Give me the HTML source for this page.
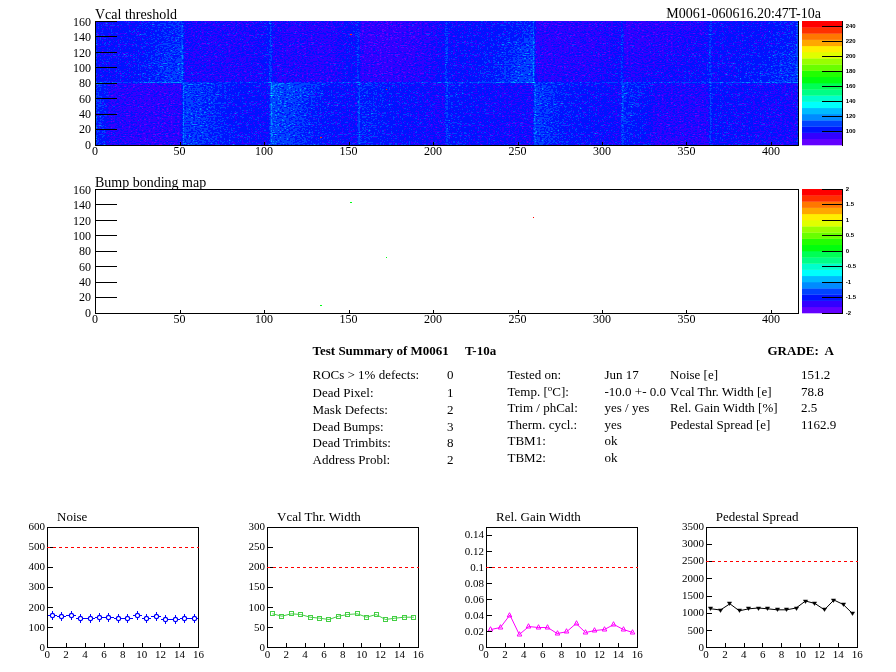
<!DOCTYPE html>
<html><head><meta charset="utf-8"><title>Test Summary of M0061</title>
<style>
html,body{margin:0;padding:0;background:#fff;}
svg{display:block;will-change:transform;}
text{font-family:"Liberation Serif",serif;fill:#000;}
.ax{font-size:12px;}
.bx{font-size:11px;}
.bt{font-size:13px;}
.tt{font-size:14px;}
.st{font-size:13px;}
.sb{font-size:13px;font-weight:bold;}
.pz{font-family:"Liberation Sans",sans-serif;font-weight:bold;font-size:6px;}
.k{stroke:#000;stroke-width:1;fill:none;shape-rendering:crispEdges;}
</style></head><body>
<svg width="896" height="672" viewBox="0 0 896 672">
<rect width="896" height="672" fill="#fff"/>
<defs><linearGradient id="gT0" x1="0" x2="1" y1="0" y2="0"><stop offset="0" stop-color="#3c3c3c"/><stop offset="0.45" stop-color="#3c3c3c"/><stop offset="0.7" stop-color="#454545"/><stop offset="1" stop-color="#4c4c4c"/></linearGradient><linearGradient id="gT1" x1="0" x2="1" y1="0" y2="0"><stop offset="0" stop-color="#333333"/><stop offset="0.75" stop-color="#313131"/><stop offset="0.9" stop-color="#383838"/><stop offset="1" stop-color="#3f3f3f"/></linearGradient><linearGradient id="gT2" x1="0" x2="1" y1="0" y2="0"><stop offset="0" stop-color="#363636"/><stop offset="0.1" stop-color="#303030"/><stop offset="0.7" stop-color="#2e2e2e"/><stop offset="0.85" stop-color="#383838"/><stop offset="1" stop-color="#3e3e3e"/></linearGradient><linearGradient id="gT3" x1="0" x2="1" y1="0" y2="0"><stop offset="0" stop-color="#2a2a2a"/><stop offset="0.3" stop-color="#252525"/><stop offset="0.6" stop-color="#2a2a2a"/><stop offset="0.85" stop-color="#313131"/><stop offset="1" stop-color="#3c3c3c"/></linearGradient><linearGradient id="gT4" x1="0" x2="1" y1="0" y2="0"><stop offset="0" stop-color="#393939"/><stop offset="0.5" stop-color="#3c3c3c"/><stop offset="0.8" stop-color="#454545"/><stop offset="1" stop-color="#4a4a4a"/></linearGradient><linearGradient id="gT5" x1="0" x2="1" y1="0" y2="0"><stop offset="0" stop-color="#2b2b2b"/><stop offset="0.7" stop-color="#2c2c2c"/><stop offset="1" stop-color="#363636"/></linearGradient><linearGradient id="gT6" x1="0" x2="1" y1="0" y2="0"><stop offset="0" stop-color="#2a2a2a"/><stop offset="0.4" stop-color="#2e2e2e"/><stop offset="1" stop-color="#363636"/></linearGradient><linearGradient id="gT7" x1="0" x2="1" y1="0" y2="0"><stop offset="0" stop-color="#393939"/><stop offset="0.6" stop-color="#3c3c3c"/><stop offset="1" stop-color="#444444"/></linearGradient><linearGradient id="gB0" x1="0" x2="1" y1="0" y2="0"><stop offset="0" stop-color="#494949"/><stop offset="0.1" stop-color="#454545"/><stop offset="0.17" stop-color="#303030"/><stop offset="0.6" stop-color="#2b2b2b"/><stop offset="1" stop-color="#2d2d2d"/></linearGradient><linearGradient id="gB1" x1="0" x2="1" y1="0" y2="0"><stop offset="0" stop-color="#535353"/><stop offset="0.3" stop-color="#4c4c4c"/><stop offset="0.6" stop-color="#3f3f3f"/><stop offset="1" stop-color="#393939"/></linearGradient><linearGradient id="gB2" x1="0" x2="1" y1="0" y2="0"><stop offset="0" stop-color="#5e5e5e"/><stop offset="0.08" stop-color="#555555"/><stop offset="0.35" stop-color="#4d4d4d"/><stop offset="0.55" stop-color="#414141"/><stop offset="1" stop-color="#383838"/></linearGradient><linearGradient id="gB3" x1="0" x2="1" y1="0" y2="0"><stop offset="0" stop-color="#494949"/><stop offset="0.4" stop-color="#3f3f3f"/><stop offset="1" stop-color="#333333"/></linearGradient><linearGradient id="gB4" x1="0" x2="1" y1="0" y2="0"><stop offset="0" stop-color="#444444"/><stop offset="0.3" stop-color="#3b3b3b"/><stop offset="1" stop-color="#333333"/></linearGradient><linearGradient id="gB5" x1="0" x2="1" y1="0" y2="0"><stop offset="0" stop-color="#525252"/><stop offset="0.15" stop-color="#4d4d4d"/><stop offset="0.35" stop-color="#424242"/><stop offset="1" stop-color="#363636"/></linearGradient><linearGradient id="gB6" x1="0" x2="1" y1="0" y2="0"><stop offset="0" stop-color="#494949"/><stop offset="0.2" stop-color="#414141"/><stop offset="0.4" stop-color="#313131"/><stop offset="1" stop-color="#2e2e2e"/></linearGradient><linearGradient id="gB7" x1="0" x2="1" y1="0" y2="0"><stop offset="0" stop-color="#3f3f3f"/><stop offset="0.3" stop-color="#393939"/><stop offset="1" stop-color="#333333"/></linearGradient><filter id="hm" filterUnits="userSpaceOnUse" x="96" y="21" width="702" height="124" color-interpolation-filters="sRGB"><feTurbulence type="fractalNoise" baseFrequency="0.45 0.9" numOctaves="1" seed="3" result="t"/><feColorMatrix in="t" type="matrix" values="0.3333 0.3333 0.3333 0 0  0.3333 0.3333 0.3333 0 0  0.3333 0.3333 0.3333 0 0  0 0 0 0 1" result="n"/><feComposite in="SourceGraphic" in2="n" operator="arithmetic" k1="0" k2="1" k3="0.78" k4="-0.3900" result="v"/><feComponentTransfer in="v"><feFuncR type="discrete" tableValues="0.388 0.200 0.000 0.000 0.000 0.000 0.000 0.000 0.000 0.000"/><feFuncG type="discrete" tableValues="0.000 0.000 0.078 0.267 0.545 0.733 1.000 1.000 1.000 1.000"/><feFuncB type="discrete" tableValues="1.000 1.000 1.000 1.000 1.000 1.000 0.988 0.800 0.522 0.333"/><feFuncA type="linear" slope="0" intercept="1"/></feComponentTransfer></filter></defs><g filter="url(#hm)"><rect x="96" y="21" width="702" height="124" fill="#3e3e3e"/><rect x="95.00" y="21" width="87.92" height="62" fill="url(#gT0)"/><rect x="182.88" y="21" width="87.92" height="62" fill="url(#gT1)"/><rect x="270.75" y="21" width="87.92" height="62" fill="url(#gT2)"/><rect x="358.62" y="21" width="87.92" height="62" fill="url(#gT3)"/><rect x="446.50" y="21" width="87.92" height="62" fill="url(#gT4)"/><rect x="534.38" y="21" width="87.92" height="62" fill="url(#gT5)"/><rect x="622.25" y="21" width="87.92" height="62" fill="url(#gT6)"/><rect x="710.12" y="21" width="87.92" height="62" fill="url(#gT7)"/><rect x="95.00" y="83" width="87.92" height="62" fill="url(#gB0)"/><rect x="182.88" y="83" width="87.92" height="62" fill="url(#gB1)"/><rect x="270.75" y="83" width="87.92" height="62" fill="url(#gB2)"/><rect x="358.62" y="83" width="87.92" height="62" fill="url(#gB3)"/><rect x="446.50" y="83" width="87.92" height="62" fill="url(#gB4)"/><rect x="534.38" y="83" width="87.92" height="62" fill="url(#gB5)"/><rect x="622.25" y="83" width="87.92" height="62" fill="url(#gB6)"/><rect x="710.12" y="83" width="87.92" height="62" fill="url(#gB7)"/><linearGradient id="ov0" x1="0" y1="0" x2="1" y2="1"><stop offset="0" stop-color="#fff" stop-opacity="0.000"/><stop offset="1" stop-color="#fff" stop-opacity="0.086"/></linearGradient><rect x="477.26" y="36.50" width="57.12" height="46.50" fill="url(#ov0)"/><linearGradient id="ov1" x1="0" y1="0" x2="1" y2="1"><stop offset="0" stop-color="#fff" stop-opacity="0.000"/><stop offset="1" stop-color="#fff" stop-opacity="0.039"/></linearGradient><rect x="130.15" y="39.60" width="52.73" height="43.40" fill="url(#ov1)"/><linearGradient id="ov2" x1="0" y1="0" x2="0" y2="1"><stop offset="0" stop-color="#000" stop-opacity="0.079"/><stop offset="0.375" stop-color="#000" stop-opacity="0.000"/><stop offset="0.375" stop-color="#fff" stop-opacity="0.000"/><stop offset="1" stop-color="#fff" stop-opacity="0.039"/></linearGradient><rect x="622.25" y="21.00" width="87.88" height="62.00" fill="url(#ov2)"/><linearGradient id="ov3" x1="0" y1="0" x2="0.6" y2="1"><stop offset="0" stop-color="#fff" stop-opacity="0.000"/><stop offset="1" stop-color="#fff" stop-opacity="0.063"/></linearGradient><rect x="736.49" y="45.80" width="61.51" height="37.20" fill="url(#ov3)"/><linearGradient id="ov4" x1="0" y1="1" x2="0" y2="0"><stop offset="0" stop-color="#fff" stop-opacity="0.000"/><stop offset="1" stop-color="#fff" stop-opacity="0.039"/></linearGradient><rect x="270.75" y="83.00" width="52.73" height="31.00" fill="url(#ov4)"/><linearGradient id="ov5" x1="0" y1="0" x2="0" y2="1"><stop offset="0" stop-color="#000" stop-opacity="0.042"/><stop offset="0.444" stop-color="#000" stop-opacity="0.000"/><stop offset="0.444" stop-color="#fff" stop-opacity="0.000"/><stop offset="1" stop-color="#fff" stop-opacity="0.016"/></linearGradient><rect x="358.62" y="21.00" width="87.88" height="62.00" fill="url(#ov5)"/><linearGradient id="ov6" x1="0" y1="0" x2="0" y2="1"><stop offset="0" stop-color="#fff" stop-opacity="0.016"/><stop offset="0.500" stop-color="#fff" stop-opacity="0.000"/><stop offset="0.500" stop-color="#000" stop-opacity="0.000"/><stop offset="1" stop-color="#000" stop-opacity="0.053"/></linearGradient><rect x="622.25" y="83.00" width="87.88" height="62.00" fill="url(#ov6)"/><linearGradient id="ov7" x1="0" y1="0" x2="0" y2="1"><stop offset="0" stop-color="#000" stop-opacity="0.026"/><stop offset="0.250" stop-color="#000" stop-opacity="0.000"/><stop offset="0.250" stop-color="#fff" stop-opacity="0.000"/><stop offset="1" stop-color="#fff" stop-opacity="0.024"/></linearGradient><rect x="534.38" y="21.00" width="87.88" height="62.00" fill="url(#ov7)"/><rect x="93.60" y="21" width="2.8" height="124" fill="#fff" fill-opacity="0.11"/><rect x="181.47" y="21" width="2.8" height="124" fill="#fff" fill-opacity="0.11"/><rect x="269.35" y="21" width="2.8" height="124" fill="#fff" fill-opacity="0.11"/><rect x="357.23" y="21" width="2.8" height="124" fill="#fff" fill-opacity="0.11"/><rect x="445.10" y="21" width="2.8" height="124" fill="#fff" fill-opacity="0.11"/><rect x="532.98" y="21" width="2.8" height="124" fill="#fff" fill-opacity="0.11"/><rect x="620.85" y="21" width="2.8" height="124" fill="#fff" fill-opacity="0.11"/><rect x="708.73" y="21" width="2.8" height="124" fill="#fff" fill-opacity="0.11"/><rect x="796.60" y="21" width="2.8" height="124" fill="#fff" fill-opacity="0.11"/><rect x="96" y="82" width="702" height="1.15" fill="#fff" fill-opacity="0.14"/></g><g shape-rendering="crispEdges" fill="#ff2900"><rect x="350" y="34" width="2" height="1"/><rect x="320" y="137" width="2" height="1"/><rect x="386" y="89" width="1" height="1"/></g>
<path class="k" d="M798.5 21V145.5H95.5V21"/>
<path class="k" d="M95.5 129.5h21M95.5 114.5h21M95.5 98.5h21M95.5 83.5h21M95.5 67.5h21M95.5 52.5h21M95.5 36.5h21M95.5 21.5h21M180.5 145.5v-4M264.5 145.5v-4M349.5 145.5v-4M433.5 145.5v-4M518.5 145.5v-4M602.5 145.5v-4M686.5 145.5v-4M771.5 145.5v-4"/>
<text class="ax" x="91" y="148.6" text-anchor="end">0</text>
<text class="ax" x="91" y="133.3" text-anchor="end">20</text>
<text class="ax" x="91" y="117.9" text-anchor="end">40</text>
<text class="ax" x="91" y="102.6" text-anchor="end">60</text>
<text class="ax" x="91" y="87.3" text-anchor="end">80</text>
<text class="ax" x="91" y="72.0" text-anchor="end">100</text>
<text class="ax" x="91" y="56.6" text-anchor="end">120</text>
<text class="ax" x="91" y="41.3" text-anchor="end">140</text>
<text class="ax" x="91" y="26.0" text-anchor="end">160</text>
<text class="ax" x="95.1" y="154.5" text-anchor="middle">0</text>
<text class="ax" x="179.6" y="154.5" text-anchor="middle">50</text>
<text class="ax" x="264.1" y="154.5" text-anchor="middle">100</text>
<text class="ax" x="348.6" y="154.5" text-anchor="middle">150</text>
<text class="ax" x="433.1" y="154.5" text-anchor="middle">200</text>
<text class="ax" x="517.6" y="154.5" text-anchor="middle">250</text>
<text class="ax" x="602.1" y="154.5" text-anchor="middle">300</text>
<text class="ax" x="686.6" y="154.5" text-anchor="middle">350</text>
<text class="ax" x="771.1" y="154.5" text-anchor="middle">400</text>
<text class="tt" x="95" y="18.5">Vcal threshold</text>
<rect x="802" y="138.80" width="41" height="6.50" fill="#6300ff"/>
<rect x="802" y="132.60" width="41" height="6.50" fill="#3300ff"/>
<rect x="802" y="126.40" width="41" height="6.50" fill="#0014ff"/>
<rect x="802" y="120.20" width="41" height="6.50" fill="#0044ff"/>
<rect x="802" y="114.00" width="41" height="6.50" fill="#008bff"/>
<rect x="802" y="107.80" width="41" height="6.50" fill="#00bbff"/>
<rect x="802" y="101.60" width="41" height="6.50" fill="#00fffc"/>
<rect x="802" y="95.40" width="41" height="6.50" fill="#00ffcc"/>
<rect x="802" y="89.20" width="41" height="6.50" fill="#00ff85"/>
<rect x="802" y="83.00" width="41" height="6.50" fill="#00ff55"/>
<rect x="802" y="76.80" width="41" height="6.50" fill="#00ff0e"/>
<rect x="802" y="70.60" width="41" height="6.50" fill="#22ff00"/>
<rect x="802" y="64.40" width="41" height="6.50" fill="#69ff00"/>
<rect x="802" y="58.20" width="41" height="6.50" fill="#99ff00"/>
<rect x="802" y="52.00" width="41" height="6.50" fill="#e0ff00"/>
<rect x="802" y="45.80" width="41" height="6.50" fill="#ffee00"/>
<rect x="802" y="39.60" width="41" height="6.50" fill="#ffa700"/>
<rect x="802" y="33.40" width="41" height="6.50" fill="#ff7700"/>
<rect x="802" y="27.20" width="41" height="6.50" fill="#ff3000"/>
<rect x="802" y="21.00" width="41" height="6.50" fill="#ff0000"/>
<text class="pz" x="845.7" y="132.9">100</text>
<text class="pz" x="845.7" y="117.9">120</text>
<text class="pz" x="845.7" y="102.9">140</text>
<text class="pz" x="845.7" y="87.9">160</text>
<text class="pz" x="845.7" y="72.9">180</text>
<text class="pz" x="845.7" y="57.9">200</text>
<text class="pz" x="845.7" y="42.9">220</text>
<text class="pz" x="845.7" y="27.9">240</text>
<path class="k" d="M842.5 21V146M842.5 131.5h-21M842.5 116.5h-21M842.5 101.5h-21M842.5 86.5h-21M842.5 71.5h-21M842.5 56.5h-21M842.5 41.5h-21M842.5 26.5h-21"/>
<text class="tt" x="821" y="18" text-anchor="end">M0061-060616.20:47T-10a</text>
<g shape-rendering="crispEdges"><rect x="350" y="202" width="2" height="1" fill="#00ff14"/><rect x="386" y="257" width="1" height="1" fill="#00ff14"/><rect x="533" y="217" width="1" height="1" fill="#ff0000"/><rect x="320" y="305" width="2" height="1" fill="#00ff14"/></g>
<path class="k" d="M95.5 189.5H798.5V313.5H95.5Z"/>
<path class="k" d="M95.5 297.5h21M95.5 282.5h21M95.5 266.5h21M95.5 251.5h21M95.5 235.5h21M95.5 220.5h21M95.5 204.5h21M180.5 313.5v-4M264.5 313.5v-4M349.5 313.5v-4M433.5 313.5v-4M518.5 313.5v-4M602.5 313.5v-4M686.5 313.5v-4M771.5 313.5v-4"/>
<text class="ax" x="91" y="316.6" text-anchor="end">0</text>
<text class="ax" x="91" y="301.3" text-anchor="end">20</text>
<text class="ax" x="91" y="286.0" text-anchor="end">40</text>
<text class="ax" x="91" y="270.6" text-anchor="end">60</text>
<text class="ax" x="91" y="255.3" text-anchor="end">80</text>
<text class="ax" x="91" y="240.0" text-anchor="end">100</text>
<text class="ax" x="91" y="224.7" text-anchor="end">120</text>
<text class="ax" x="91" y="209.3" text-anchor="end">140</text>
<text class="ax" x="91" y="194.0" text-anchor="end">160</text>
<text class="ax" x="95.1" y="322.5" text-anchor="middle">0</text>
<text class="ax" x="179.6" y="322.5" text-anchor="middle">50</text>
<text class="ax" x="264.1" y="322.5" text-anchor="middle">100</text>
<text class="ax" x="348.6" y="322.5" text-anchor="middle">150</text>
<text class="ax" x="433.1" y="322.5" text-anchor="middle">200</text>
<text class="ax" x="517.6" y="322.5" text-anchor="middle">250</text>
<text class="ax" x="602.1" y="322.5" text-anchor="middle">300</text>
<text class="ax" x="686.6" y="322.5" text-anchor="middle">350</text>
<text class="ax" x="771.1" y="322.5" text-anchor="middle">400</text>
<text class="tt" x="95" y="186.5">Bump bonding map</text>
<rect x="802" y="306.80" width="41" height="6.50" fill="#6300ff"/>
<rect x="802" y="300.60" width="41" height="6.50" fill="#3300ff"/>
<rect x="802" y="294.40" width="41" height="6.50" fill="#0014ff"/>
<rect x="802" y="288.20" width="41" height="6.50" fill="#0044ff"/>
<rect x="802" y="282.00" width="41" height="6.50" fill="#008bff"/>
<rect x="802" y="275.80" width="41" height="6.50" fill="#00bbff"/>
<rect x="802" y="269.60" width="41" height="6.50" fill="#00fffc"/>
<rect x="802" y="263.40" width="41" height="6.50" fill="#00ffcc"/>
<rect x="802" y="257.20" width="41" height="6.50" fill="#00ff85"/>
<rect x="802" y="251.00" width="41" height="6.50" fill="#00ff55"/>
<rect x="802" y="244.80" width="41" height="6.50" fill="#00ff0e"/>
<rect x="802" y="238.60" width="41" height="6.50" fill="#22ff00"/>
<rect x="802" y="232.40" width="41" height="6.50" fill="#69ff00"/>
<rect x="802" y="226.20" width="41" height="6.50" fill="#99ff00"/>
<rect x="802" y="220.00" width="41" height="6.50" fill="#e0ff00"/>
<rect x="802" y="213.80" width="41" height="6.50" fill="#ffee00"/>
<rect x="802" y="207.60" width="41" height="6.50" fill="#ffa700"/>
<rect x="802" y="201.40" width="41" height="6.50" fill="#ff7700"/>
<rect x="802" y="195.20" width="41" height="6.50" fill="#ff3000"/>
<rect x="802" y="189.00" width="41" height="6.50" fill="#ff0000"/>
<text class="pz" x="845.7" y="314.9">-2</text>
<text class="pz" x="845.7" y="298.9">-1.5</text>
<text class="pz" x="845.7" y="283.9">-1</text>
<text class="pz" x="845.7" y="267.9">-0.5</text>
<text class="pz" x="845.7" y="252.9">0</text>
<text class="pz" x="845.7" y="236.9">0.5</text>
<text class="pz" x="845.7" y="221.9">1</text>
<text class="pz" x="845.7" y="205.9">1.5</text>
<text class="pz" x="845.7" y="190.9">2</text>
<path class="k" d="M842.5 189V314M842.5 313.5h-21M842.5 297.5h-21M842.5 282.5h-21M842.5 266.5h-21M842.5 251.5h-21M842.5 235.5h-21M842.5 220.5h-21M842.5 204.5h-21M842.5 189.5h-21"/>
<text class="sb" x="312.5" y="354.5" xml:space="preserve">Test Summary of M0061     T-10a</text>
<text class="sb" x="767.5" y="354.5" xml:space="preserve">GRADE:  A</text>
<text class="st" x="312.5" y="379">ROCs &gt; 1% defects:</text>
<text class="st" x="447" y="379">0</text>
<text class="st" x="507.5" y="379">Tested on:</text>
<text class="st" x="604.5" y="379">Jun 17</text>
<text class="st" x="670" y="379">Noise [e]</text>
<text class="st" x="801" y="379">151.2</text>
<text class="st" x="312.5" y="397">Dead Pixel:</text>
<text class="st" x="447" y="397">1</text>
<text class="st" x="507.5" y="395.8">Temp. [<tspan dy="-5" font-size="9">o</tspan><tspan dy="5">C]:</tspan></text>
<text class="st" x="604.5" y="395.8">-10.0 +- 0.0</text>
<text class="st" x="670" y="395.8">Vcal Thr. Width [e]</text>
<text class="st" x="801" y="395.8">78.8</text>
<text class="st" x="312.5" y="414">Mask Defects:</text>
<text class="st" x="447" y="414">2</text>
<text class="st" x="507.5" y="411.6">Trim / phCal:</text>
<text class="st" x="604.5" y="411.6">yes / yes</text>
<text class="st" x="670" y="411.6">Rel. Gain Width [%]</text>
<text class="st" x="801" y="411.6">2.5</text>
<text class="st" x="312.5" y="431">Dead Bumps:</text>
<text class="st" x="447" y="431">3</text>
<text class="st" x="507.5" y="428.6">Therm. cycl.:</text>
<text class="st" x="604.5" y="428.6">yes</text>
<text class="st" x="670" y="428.6">Pedestal Spread [e]</text>
<text class="st" x="801" y="428.6">1162.9</text>
<text class="st" x="312.5" y="447">Dead Trimbits:</text>
<text class="st" x="447" y="447">8</text>
<text class="st" x="507.5" y="445.4">TBM1:</text>
<text class="st" x="604.5" y="445.4">ok</text>
<text class="st" x="312.5" y="464">Address Probl:</text>
<text class="st" x="447" y="464">2</text>
<text class="st" x="507.5" y="461.9">TBM2:</text>
<text class="st" x="604.5" y="461.9">ok</text>
<text class="bt" x="57" y="521">Noise</text>
<g><path d="M48 615.5H50.0M55.0 615.5H57M52.5 611.0V613.0M52.5 618.0V620.0" stroke="#0000ff" stroke-width="1" fill="none" shape-rendering="crispEdges"/><circle cx="52.5" cy="615.5" r="2.1" fill="none" stroke="#0000ff" stroke-width="1.1"/><path d="M57 616.5H59.0M64.0 616.5H66M61.5 612.0V614.0M61.5 619.0V621.0" stroke="#0000ff" stroke-width="1" fill="none" shape-rendering="crispEdges"/><circle cx="61.5" cy="616.5" r="2.1" fill="none" stroke="#0000ff" stroke-width="1.1"/><path d="M66 615.5H69.0M74.0 615.5H76M71.5 611.0V613.0M71.5 618.0V620.0" stroke="#0000ff" stroke-width="1" fill="none" shape-rendering="crispEdges"/><circle cx="71.5" cy="615.5" r="2.1" fill="none" stroke="#0000ff" stroke-width="1.1"/><path d="M76 618.5H78.0M83.0 618.5H85M80.5 614.0V616.0M80.5 621.0V623.0" stroke="#0000ff" stroke-width="1" fill="none" shape-rendering="crispEdges"/><circle cx="80.5" cy="618.5" r="2.1" fill="none" stroke="#0000ff" stroke-width="1.1"/><path d="M85 618.5H88.0M93.0 618.5H95M90.5 614.0V616.0M90.5 621.0V623.0" stroke="#0000ff" stroke-width="1" fill="none" shape-rendering="crispEdges"/><circle cx="90.5" cy="618.5" r="2.1" fill="none" stroke="#0000ff" stroke-width="1.1"/><path d="M95 617.5H97.0M102.0 617.5H104M99.5 613.0V615.0M99.5 620.0V622.0" stroke="#0000ff" stroke-width="1" fill="none" shape-rendering="crispEdges"/><circle cx="99.5" cy="617.5" r="2.1" fill="none" stroke="#0000ff" stroke-width="1.1"/><path d="M104 617.5H106.0M111.0 617.5H114M108.5 613.0V615.0M108.5 620.0V622.0" stroke="#0000ff" stroke-width="1" fill="none" shape-rendering="crispEdges"/><circle cx="108.5" cy="617.5" r="2.1" fill="none" stroke="#0000ff" stroke-width="1.1"/><path d="M114 618.5H116.0M121.0 618.5H123M118.5 614.0V616.0M118.5 621.0V623.0" stroke="#0000ff" stroke-width="1" fill="none" shape-rendering="crispEdges"/><circle cx="118.5" cy="618.5" r="2.1" fill="none" stroke="#0000ff" stroke-width="1.1"/><path d="M123 618.5H125.0M130.0 618.5H133M127.5 614.0V616.0M127.5 621.0V623.0" stroke="#0000ff" stroke-width="1" fill="none" shape-rendering="crispEdges"/><circle cx="127.5" cy="618.5" r="2.1" fill="none" stroke="#0000ff" stroke-width="1.1"/><path d="M133 615.5H135.0M140.0 615.5H142M137.5 611.0V613.0M137.5 618.0V620.0" stroke="#0000ff" stroke-width="1" fill="none" shape-rendering="crispEdges"/><circle cx="137.5" cy="615.5" r="2.1" fill="none" stroke="#0000ff" stroke-width="1.1"/><path d="M142 618.5H144.0M149.0 618.5H151M146.5 614.0V616.0M146.5 621.0V623.0" stroke="#0000ff" stroke-width="1" fill="none" shape-rendering="crispEdges"/><circle cx="146.5" cy="618.5" r="2.1" fill="none" stroke="#0000ff" stroke-width="1.1"/><path d="M151 616.5H154.0M159.0 616.5H161M156.5 612.0V614.0M156.5 619.0V621.0" stroke="#0000ff" stroke-width="1" fill="none" shape-rendering="crispEdges"/><circle cx="156.5" cy="616.5" r="2.1" fill="none" stroke="#0000ff" stroke-width="1.1"/><path d="M161 619.5H163.0M168.0 619.5H170M165.5 615.0V617.0M165.5 622.0V624.0" stroke="#0000ff" stroke-width="1" fill="none" shape-rendering="crispEdges"/><circle cx="165.5" cy="619.5" r="2.1" fill="none" stroke="#0000ff" stroke-width="1.1"/><path d="M170 619.5H173.0M178.0 619.5H180M175.5 615.0V617.0M175.5 622.0V624.0" stroke="#0000ff" stroke-width="1" fill="none" shape-rendering="crispEdges"/><circle cx="175.5" cy="619.5" r="2.1" fill="none" stroke="#0000ff" stroke-width="1.1"/><path d="M180 618.5H182.0M187.0 618.5H189M184.5 614.0V616.0M184.5 621.0V623.0" stroke="#0000ff" stroke-width="1" fill="none" shape-rendering="crispEdges"/><circle cx="184.5" cy="618.5" r="2.1" fill="none" stroke="#0000ff" stroke-width="1.1"/><path d="M189 618.5H192.0M197.0 618.5H199M194.5 614.0V616.0M194.5 621.0V623.0" stroke="#0000ff" stroke-width="1" fill="none" shape-rendering="crispEdges"/><circle cx="194.5" cy="618.5" r="2.1" fill="none" stroke="#0000ff" stroke-width="1.1"/></g>
<path class="k" d="M47.5 527.5H198.5V647.5H47.5Z"/>
<text class="bx" x="45" y="650.6" text-anchor="end">0</text>
<text class="bx" x="45" y="630.6" text-anchor="end">100</text>
<text class="bx" x="45" y="610.5" text-anchor="end">200</text>
<text class="bx" x="45" y="590.4" text-anchor="end">300</text>
<text class="bx" x="45" y="570.2" text-anchor="end">400</text>
<text class="bx" x="45" y="550.0" text-anchor="end">500</text>
<text class="bx" x="45" y="529.9" text-anchor="end">600</text>
<text class="bx" x="47.2" y="657.5" text-anchor="middle">0</text>
<text class="bx" x="66.1" y="657.5" text-anchor="middle">2</text>
<text class="bx" x="85.0" y="657.5" text-anchor="middle">4</text>
<text class="bx" x="103.9" y="657.5" text-anchor="middle">6</text>
<text class="bx" x="122.8" y="657.5" text-anchor="middle">8</text>
<text class="bx" x="141.7" y="657.5" text-anchor="middle">10</text>
<text class="bx" x="160.6" y="657.5" text-anchor="middle">12</text>
<text class="bx" x="179.5" y="657.5" text-anchor="middle">14</text>
<text class="bx" x="198.4" y="657.5" text-anchor="middle">16</text>
<path class="k" d="M47.5 627.5h5M47.5 607.5h5M47.5 587.5h5M47.5 567.5h5M47.5 547.5h5M66.5 647.5v-5M85.5 647.5v-5M104.5 647.5v-5M123.5 647.5v-5M142.5 647.5v-5M160.5 647.5v-5M179.5 647.5v-5"/>
<path d="M47 547.5H199" stroke="#ff0000" stroke-width="1" stroke-dasharray="3 3" fill="none" shape-rendering="crispEdges"/>
<text class="bt" x="277" y="521">Vcal Thr. Width</text>
<g><polyline fill="none" stroke="#44cf44" stroke-width="1" points="272.5,613.8 281.9,616.2 291.3,613.8 300.7,614.5 310.1,617.2 319.6,618.2 329.0,619.5 338.4,616.2 347.8,614.5 357.3,613.8 366.7,617.2 376.1,614.5 385.5,619.5 394.9,618.2 404.4,617.2 413.8,617.2"/><rect x="270.5" y="611.5" width="4" height="4" fill="none" stroke="#44cf44" stroke-width="1" shape-rendering="crispEdges"/><rect x="279.5" y="614.5" width="4" height="4" fill="none" stroke="#44cf44" stroke-width="1" shape-rendering="crispEdges"/><rect x="289.5" y="611.5" width="4" height="4" fill="none" stroke="#44cf44" stroke-width="1" shape-rendering="crispEdges"/><rect x="298.5" y="612.5" width="4" height="4" fill="none" stroke="#44cf44" stroke-width="1" shape-rendering="crispEdges"/><rect x="308.5" y="615.5" width="4" height="4" fill="none" stroke="#44cf44" stroke-width="1" shape-rendering="crispEdges"/><rect x="317.5" y="616.5" width="4" height="4" fill="none" stroke="#44cf44" stroke-width="1" shape-rendering="crispEdges"/><rect x="326.5" y="617.5" width="4" height="4" fill="none" stroke="#44cf44" stroke-width="1" shape-rendering="crispEdges"/><rect x="336.5" y="614.5" width="4" height="4" fill="none" stroke="#44cf44" stroke-width="1" shape-rendering="crispEdges"/><rect x="345.5" y="612.5" width="4" height="4" fill="none" stroke="#44cf44" stroke-width="1" shape-rendering="crispEdges"/><rect x="355.5" y="611.5" width="4" height="4" fill="none" stroke="#44cf44" stroke-width="1" shape-rendering="crispEdges"/><rect x="364.5" y="615.5" width="4" height="4" fill="none" stroke="#44cf44" stroke-width="1" shape-rendering="crispEdges"/><rect x="374.5" y="612.5" width="4" height="4" fill="none" stroke="#44cf44" stroke-width="1" shape-rendering="crispEdges"/><rect x="383.5" y="617.5" width="4" height="4" fill="none" stroke="#44cf44" stroke-width="1" shape-rendering="crispEdges"/><rect x="392.5" y="616.5" width="4" height="4" fill="none" stroke="#44cf44" stroke-width="1" shape-rendering="crispEdges"/><rect x="402.5" y="615.5" width="4" height="4" fill="none" stroke="#44cf44" stroke-width="1" shape-rendering="crispEdges"/><rect x="411.5" y="615.5" width="4" height="4" fill="none" stroke="#44cf44" stroke-width="1" shape-rendering="crispEdges"/></g>
<path class="k" d="M267.5 527.5H418.5V647.5H267.5Z"/>
<text class="bx" x="265" y="650.6" text-anchor="end">0</text>
<text class="bx" x="265" y="630.6" text-anchor="end">50</text>
<text class="bx" x="265" y="610.5" text-anchor="end">100</text>
<text class="bx" x="265" y="590.4" text-anchor="end">150</text>
<text class="bx" x="265" y="570.2" text-anchor="end">200</text>
<text class="bx" x="265" y="550.0" text-anchor="end">250</text>
<text class="bx" x="265" y="529.9" text-anchor="end">300</text>
<text class="bx" x="267.4" y="657.5" text-anchor="middle">0</text>
<text class="bx" x="286.3" y="657.5" text-anchor="middle">2</text>
<text class="bx" x="305.1" y="657.5" text-anchor="middle">4</text>
<text class="bx" x="324.0" y="657.5" text-anchor="middle">6</text>
<text class="bx" x="342.8" y="657.5" text-anchor="middle">8</text>
<text class="bx" x="361.7" y="657.5" text-anchor="middle">10</text>
<text class="bx" x="380.5" y="657.5" text-anchor="middle">12</text>
<text class="bx" x="399.4" y="657.5" text-anchor="middle">14</text>
<text class="bx" x="418.2" y="657.5" text-anchor="middle">16</text>
<path class="k" d="M267.5 627.5h5M267.5 607.5h5M267.5 587.5h5M267.5 567.5h5M267.5 547.5h5M286.5 647.5v-5M305.5 647.5v-5M324.5 647.5v-5M343.5 647.5v-5M361.5 647.5v-5M380.5 647.5v-5M399.5 647.5v-5"/>
<path d="M267 567.5H419" stroke="#ff0000" stroke-width="1" stroke-dasharray="3 3" fill="none" shape-rendering="crispEdges"/>
<text class="bt" x="496" y="521">Rel. Gain Width</text>
<g><polyline fill="none" stroke="#ff00ff" stroke-width="1" points="491.0,629.5 500.4,627.5 509.9,615.0 519.3,634.5 528.8,626.5 538.2,627.5 547.7,627.5 557.1,633.5 566.6,631.8 576.1,623.5 585.5,632.5 595.0,630.5 604.4,629.5 613.9,624.5 623.3,629.5 632.8,632.5"/><path d="M488.2 631.0L490.5 626.7L492.8 631.0Z" fill="none" stroke="#ff00ff" stroke-width="1"/><path d="M498.2 629.0L500.5 624.7L502.8 629.0Z" fill="none" stroke="#ff00ff" stroke-width="1"/><path d="M507.2 617.0L509.5 612.7L511.8 617.0Z" fill="none" stroke="#ff00ff" stroke-width="1"/><path d="M517.2 636.0L519.5 631.7L521.8 636.0Z" fill="none" stroke="#ff00ff" stroke-width="1"/><path d="M526.2 628.0L528.5 623.7L530.8 628.0Z" fill="none" stroke="#ff00ff" stroke-width="1"/><path d="M536.2 629.0L538.5 624.7L540.8 629.0Z" fill="none" stroke="#ff00ff" stroke-width="1"/><path d="M545.2 629.0L547.5 624.7L549.8 629.0Z" fill="none" stroke="#ff00ff" stroke-width="1"/><path d="M555.2 635.0L557.5 630.7L559.8 635.0Z" fill="none" stroke="#ff00ff" stroke-width="1"/><path d="M564.2 633.0L566.5 628.7L568.8 633.0Z" fill="none" stroke="#ff00ff" stroke-width="1"/><path d="M574.2 625.0L576.5 620.7L578.8 625.0Z" fill="none" stroke="#ff00ff" stroke-width="1"/><path d="M583.2 634.0L585.5 629.7L587.8 634.0Z" fill="none" stroke="#ff00ff" stroke-width="1"/><path d="M592.2 632.0L594.5 627.7L596.8 632.0Z" fill="none" stroke="#ff00ff" stroke-width="1"/><path d="M602.2 631.0L604.5 626.7L606.8 631.0Z" fill="none" stroke="#ff00ff" stroke-width="1"/><path d="M611.2 626.0L613.5 621.7L615.8 626.0Z" fill="none" stroke="#ff00ff" stroke-width="1"/><path d="M621.2 631.0L623.5 626.7L625.8 631.0Z" fill="none" stroke="#ff00ff" stroke-width="1"/><path d="M630.2 634.0L632.5 629.7L634.8 634.0Z" fill="none" stroke="#ff00ff" stroke-width="1"/></g>
<path class="k" d="M486.5 527.5H637.5V647.5H486.5Z"/>
<text class="bx" x="484" y="650.6" text-anchor="end">0</text>
<text class="bx" x="484" y="634.7" text-anchor="end">0.02</text>
<text class="bx" x="484" y="618.7" text-anchor="end">0.04</text>
<text class="bx" x="484" y="602.6" text-anchor="end">0.06</text>
<text class="bx" x="484" y="586.6" text-anchor="end">0.08</text>
<text class="bx" x="484" y="570.5" text-anchor="end">0.1</text>
<text class="bx" x="484" y="554.5" text-anchor="end">0.12</text>
<text class="bx" x="484" y="538.4" text-anchor="end">0.14</text>
<text class="bx" x="485.9" y="657.5" text-anchor="middle">0</text>
<text class="bx" x="504.9" y="657.5" text-anchor="middle">2</text>
<text class="bx" x="523.8" y="657.5" text-anchor="middle">4</text>
<text class="bx" x="542.7" y="657.5" text-anchor="middle">6</text>
<text class="bx" x="561.6" y="657.5" text-anchor="middle">8</text>
<text class="bx" x="580.5" y="657.5" text-anchor="middle">10</text>
<text class="bx" x="599.4" y="657.5" text-anchor="middle">12</text>
<text class="bx" x="618.3" y="657.5" text-anchor="middle">14</text>
<text class="bx" x="637.2" y="657.5" text-anchor="middle">16</text>
<path class="k" d="M486.5 631.5h5M486.5 615.5h5M486.5 599.5h5M486.5 583.5h5M486.5 567.5h5M486.5 551.5h5M486.5 535.5h5M505.5 647.5v-5M524.5 647.5v-5M542.5 647.5v-5M561.5 647.5v-5M580.5 647.5v-5M599.5 647.5v-5M618.5 647.5v-5"/>
<path d="M486 567.5H638" stroke="#ff0000" stroke-width="1" stroke-dasharray="3 3" fill="none" shape-rendering="crispEdges"/>
<text class="bt" x="715.75" y="521">Pedestal Spread</text>
<g><polyline fill="none" stroke="#000000" stroke-width="1" points="711.0,608.8 720.4,610.0 729.9,603.8 739.3,610.8 748.8,608.8 758.2,608.0 767.7,608.8 777.1,609.8 786.6,609.8 796.1,608.0 805.5,601.0 815.0,603.5 824.4,609.8 833.9,600.0 843.3,604.5 852.8,613.8"/><path d="M708.3 606.9L710.5 610.5L712.7 606.9Z" fill="#000000" stroke="#000000" stroke-width="0.4"/><path d="M718.3 608.9L720.5 612.5L722.7 608.9Z" fill="#000000" stroke="#000000" stroke-width="0.4"/><path d="M727.3 601.9L729.5 605.5L731.7 601.9Z" fill="#000000" stroke="#000000" stroke-width="0.4"/><path d="M737.3 608.9L739.5 612.5L741.7 608.9Z" fill="#000000" stroke="#000000" stroke-width="0.4"/><path d="M746.3 606.9L748.5 610.5L750.7 606.9Z" fill="#000000" stroke="#000000" stroke-width="0.4"/><path d="M756.3 606.9L758.5 610.5L760.7 606.9Z" fill="#000000" stroke="#000000" stroke-width="0.4"/><path d="M765.3 606.9L767.5 610.5L769.7 606.9Z" fill="#000000" stroke="#000000" stroke-width="0.4"/><path d="M775.3 607.9L777.5 611.5L779.7 607.9Z" fill="#000000" stroke="#000000" stroke-width="0.4"/><path d="M784.3 607.9L786.5 611.5L788.7 607.9Z" fill="#000000" stroke="#000000" stroke-width="0.4"/><path d="M794.3 606.9L796.5 610.5L798.7 606.9Z" fill="#000000" stroke="#000000" stroke-width="0.4"/><path d="M803.3 599.9L805.5 603.5L807.7 599.9Z" fill="#000000" stroke="#000000" stroke-width="0.4"/><path d="M812.3 601.9L814.5 605.5L816.7 601.9Z" fill="#000000" stroke="#000000" stroke-width="0.4"/><path d="M822.3 607.9L824.5 611.5L826.7 607.9Z" fill="#000000" stroke="#000000" stroke-width="0.4"/><path d="M831.3 598.9L833.5 602.5L835.7 598.9Z" fill="#000000" stroke="#000000" stroke-width="0.4"/><path d="M841.3 602.9L843.5 606.5L845.7 602.9Z" fill="#000000" stroke="#000000" stroke-width="0.4"/><path d="M850.3 611.9L852.5 615.5L854.7 611.9Z" fill="#000000" stroke="#000000" stroke-width="0.4"/></g>
<path class="k" d="M706.5 527.5H857.5V647.5H706.5Z"/>
<text class="bx" x="704" y="650.6" text-anchor="end">0</text>
<text class="bx" x="704" y="633.5" text-anchor="end">500</text>
<text class="bx" x="704" y="616.3" text-anchor="end">1000</text>
<text class="bx" x="704" y="599.0" text-anchor="end">1500</text>
<text class="bx" x="704" y="581.7" text-anchor="end">2000</text>
<text class="bx" x="704" y="564.4" text-anchor="end">2500</text>
<text class="bx" x="704" y="547.2" text-anchor="end">3000</text>
<text class="bx" x="704" y="529.9" text-anchor="end">3500</text>
<text class="bx" x="706.0" y="657.5" text-anchor="middle">0</text>
<text class="bx" x="724.9" y="657.5" text-anchor="middle">2</text>
<text class="bx" x="743.8" y="657.5" text-anchor="middle">4</text>
<text class="bx" x="762.7" y="657.5" text-anchor="middle">6</text>
<text class="bx" x="781.6" y="657.5" text-anchor="middle">8</text>
<text class="bx" x="800.5" y="657.5" text-anchor="middle">10</text>
<text class="bx" x="819.4" y="657.5" text-anchor="middle">12</text>
<text class="bx" x="838.3" y="657.5" text-anchor="middle">14</text>
<text class="bx" x="857.2" y="657.5" text-anchor="middle">16</text>
<path class="k" d="M706.5 630.5h5M706.5 613.5h5M706.5 596.5h5M706.5 578.5h5M706.5 561.5h5M706.5 544.5h5M725.5 647.5v-5M744.5 647.5v-5M762.5 647.5v-5M781.5 647.5v-5M800.5 647.5v-5M819.5 647.5v-5M838.5 647.5v-5"/>
<path d="M706 561.5H858" stroke="#ff0000" stroke-width="1" stroke-dasharray="3 3" fill="none" shape-rendering="crispEdges"/>
</svg></body></html>
